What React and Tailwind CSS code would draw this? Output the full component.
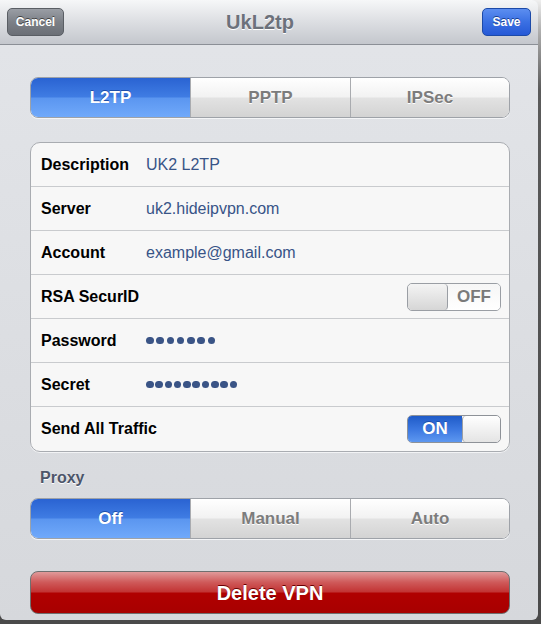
import React from "react";

const font = { fontFamily: '"Liberation Sans", Arial, Helvetica, sans-serif' };

function Segmented({ items, selected }) {
  return (
    <div className="flex h-[41px] rounded-[8px] border border-[#9ea2a8] overflow-hidden bg-white shadow-[0_1px_0_#f4f5f7]">
      {items.map((t, i) => {
        const sel = i === selected;
        const widths = ["w-[159px]", "w-[160px]", "flex-1"];
        return (
          <div
            key={t}
            className={
              "flex items-center justify-center text-[17px] font-bold " +
              widths[i] +
              (i > 0 ? " border-l border-[#a9abaf]" : "") +
              (sel
                ? " text-white bg-[linear-gradient(#2a63d2,#3f7ce3_48%,#5b96f0_52%,#70a9fa)] [text-shadow:0_-1px_0_#1d4ea8]"
                : " text-[#7c7c7c] bg-[linear-gradient(#ffffff,#f2f2f2_48%,#e2e2e2_52%,#d3d3d3)] [text-shadow:0_1px_0_#fff]")
            }
          >
            {t}
          </div>
        );
      })}
    </div>
  );
}

function Toggle({ on }) {
  if (on) {
    return (
      <div className="flex w-[94px] h-[28px] rounded-[5px] border border-[#8e9298] overflow-hidden">
        <div className="w-[54px] flex items-center justify-center text-white font-bold text-[17px] bg-[linear-gradient(#1f5bc8,#3b77e0_50%,#5d97f0)] [text-shadow:0_-1px_0_#1d4ea8]">
          ON
        </div>
        <div className="flex-1 border-l border-[#9a9ea4] rounded-[4px] bg-[linear-gradient(#ffffff,#e4e4e4)]" />
      </div>
    );
  }
  return (
    <div className="flex w-[94px] h-[28px] rounded-[5px] border border-[#9a9ea4] overflow-hidden">
      <div className="w-[40px] border-r border-[#9a9ea4] rounded-[4px] bg-[linear-gradient(#f4f4f4,#d6d6d6)]" />
      <div className="flex-1 flex items-center justify-center text-[#7a7a7a] font-bold text-[17px] bg-[linear-gradient(#f6f6f6,#ffffff)]">
        OFF
      </div>
    </div>
  );
}

function Row({ label, value, dots, gap, toggle, last }) {
  return (
    <div
      className={
        "flex items-center h-[44px] px-[10px] " + (last ? "" : "border-b border-[#c9cbce]")
      }
    >
      <div className="w-[105px] text-[16px] font-bold text-black whitespace-nowrap">{label}</div>
      {value && <div className="text-[16px] text-[#385487]">{value}</div>}
      {dots && (
        <div className={"flex " + gap}>
          {Array.from({ length: dots }).map((_, i) => (
            <span key={i} className="w-[7.5px] h-[7.5px] rounded-full bg-[#3a5486]" />
          ))}
        </div>
      )}
      {toggle !== undefined && (
        <div className="ml-auto mr-[-2px]">
          <Toggle on={toggle} />
        </div>
      )}
    </div>
  );
}

export default function App() {
  return (
    <div
      style={font}
      className="w-[541px] h-[624px] overflow-hidden bg-[linear-gradient(#efefef,#b0b0b0_30px,#5a5a5a_90px,#4a4a4a)]"
    >
      <div className="w-[538px] h-[620px] rounded-tr-[6px] rounded-b-[6px] overflow-hidden flex flex-col bg-[linear-gradient(#e3e5e9,#d6d8dc)]">
        {/* header */}
        <div className="h-[45px] shrink-0 flex items-center px-[7px] border-b border-[#8b8f96] bg-[linear-gradient(#f6f7f8,#dcdee2_50%,#c4c7cd)]">
          <div className="w-[57px] h-[28px] rounded-[5px] border border-[#5a5e64] flex items-center justify-center text-white font-bold text-[12px] bg-[linear-gradient(#9a9ea5,#7c8087_50%,#6b6f76)] [text-shadow:0_-1px_0_#444]">
            Cancel
          </div>
          <div className="flex-1 flex justify-center pr-[26px] text-[20px] font-bold text-[#6c717b] [text-shadow:0_1px_0_#fff]">
            UkL2tp
          </div>
          <div className="w-[49px] h-[28px] rounded-[5px] border border-[#1c4aa8] flex items-center justify-center text-white font-bold text-[12px] bg-[linear-gradient(#5c8ef0,#3a70e3_50%,#2659d6)] [text-shadow:0_-1px_0_#1a3f8f]">
            Save
          </div>
        </div>

        <div className="px-[30px] pr-[28px] flex flex-col">
          <div className="mt-[32px]">
            <Segmented items={["L2TP", "PPTP", "IPSec"]} selected={0} />
          </div>

          <div className="mt-[24px] rounded-[10px] border border-[#a9acb1] bg-[#f7f7f7] shadow-[0_1px_0_#f2f3f5] overflow-hidden">
            <Row label="Description" value="UK2 L2TP" />
            <Row label="Server" value="uk2.hideipvpn.com" />
            <Row label="Account" value="example@gmail.com" />
            <Row label="RSA SecurID" toggle={false} />
            <Row label="Password" dots={7} gap="gap-[2.8px]" />
            <Row label="Secret" dots={10} gap="gap-[1.8px]" />
            <Row label="Send All Traffic" toggle={true} last />
          </div>

          <div className="mt-[17px] pl-[10px] text-[16px] font-bold text-[#4d566a] [text-shadow:0_1px_0_#fff] leading-[18px]">
            Proxy
          </div>

          <div className="mt-[11px]">
            <Segmented items={["Off", "Manual", "Auto"]} selected={0} />
          </div>

          <div className="mt-[32px] h-[43px] rounded-[8px] border border-[#6f6f6f] flex items-center justify-center text-white font-bold text-[20px] bg-[linear-gradient(#e09a9a,#cf5a5a_25%,#c23434_48%,#b00000_52%,#a80000)] [text-shadow:0_-1px_0_#6a0000]">
            Delete VPN
          </div>
        </div>
      </div>
    </div>
  );
}
